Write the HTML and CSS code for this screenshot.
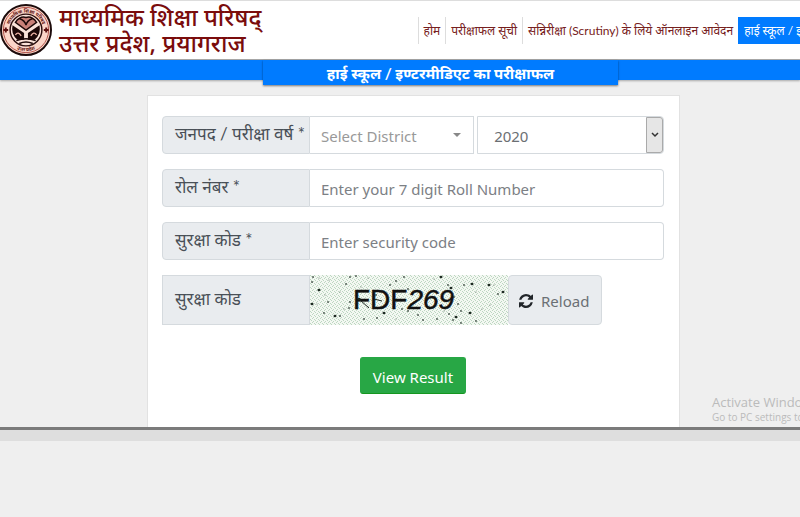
FILE: index.html
```html
<!DOCTYPE html>
<html lang="hi">
<head>
  <meta charset="UTF-8">
  <meta name="viewport" content="width=device-width, initial-scale=1.0">
  <title>हाई स्कूल / इण्टरमीडिएट का परीक्षाफल</title>
  <link rel="stylesheet" href="styles.css">
</head>
<body>

  <header class="site-header">
    <a class="brand" href="#">
      <svg class="logo" viewBox="0 0 54 54" aria-hidden="true">
        <circle cx="27" cy="27" r="26" fill="#fbd5c8" stroke="#1c0b0b" stroke-width="2"/>
        <circle cx="27" cy="27" r="23.5" fill="none" stroke="#b0524a" stroke-width="1"/>
        <path id="ringTop" d="M9 27a18 18 0 0 1 36 0" fill="none"/>
        <path id="ringBottom" d="M5 27a22 22 0 0 0 44 0" fill="none"/>
        <text class="logo-text"><textPath href="#ringTop" startOffset="50%">माध्यमिक शिक्षा परिषद</textPath></text>
        <text class="logo-text"><textPath href="#ringBottom" startOffset="50%">उत्तर प्रदेश</textPath></text>
        <path d="M3.500 27h5M6 24.500v5M45.500 27h5M48 24.500v5" stroke="#5c1010" stroke-width="2"/>
        <circle cx="27" cy="27" r="16.500" fill="#fbe3da" stroke="#2a0d0d" stroke-width="1.500"/>
        <path d="M16 19Q21 12 27 14Q33 12 38 19L27 27Z" fill="#c98078" stroke="#1d0808" stroke-width="1.500"/>
        <path d="M20 15Q26 17 27 22Q28 17 34 15" fill="none" stroke="#1d0808" stroke-width="1.500"/>
        <path d="M13 22L25 30V37H18Q11 31 13 22ZM41 22L29 30V37H36Q43 31 41 22Z" fill="#1d0808"/>
        <path d="M16 32Q19 28 22 33M38 32Q35 28 32 33" fill="none" stroke="#f0b6a8" stroke-width="1.500"/>
        <path d="M17 38Q27 34 37 38M20 41Q27 38 34 41" fill="none" stroke="#1d0808" stroke-width="1.500"/>
      </svg>
      <span class="brand-name">माध्यमिक शिक्षा परिषद्<br>उत्तर प्रदेश, प्रयागराज</span>
    </a>
    <nav class="main-nav">
      <a href="#">होम</a>
      <a href="#">परीक्षाफल सूची</a>
      <a href="#">सन्निरीक्षा (Scrutiny) के लिये ऑनलाइन आवेदन</a>
      <a class="active" href="#">हाई स्कूल / इण्टरमीडिएट का परीक्षाफल</a>
    </nav>
  </header>

  <div class="title-bar">
    <h1 class="page-title">हाई स्कूल / इण्टरमीडिएट का परीक्षाफल</h1>
  </div>

  <main class="content">
    <form class="result-form">
      <div class="form-row">
        <label class="row-label" for="district">जनपद / परीक्षा वर्ष *</label>
        <div class="select-box district">
          <select id="district">
            <option>Select District</option>
          </select>
          <span class="caret"></span>
        </div>
        <div class="select-box year">
          <select id="year" aria-label="परीक्षा वर्ष">
            <option>2020</option>
          </select>
          <span class="arrow-button">
            <svg viewBox="0 0 8 6" width="8" height="6"><path d="M1 1l3 3 3-3" fill="none" stroke="#333" stroke-width="1.500"/></svg>
          </span>
        </div>
      </div>

      <div class="form-row">
        <label class="row-label" for="roll">रोल नंबर *</label>
        <input class="row-input" type="text" id="roll" placeholder="Enter your 7 digit Roll Number">
      </div>

      <div class="form-row">
        <label class="row-label" for="code">सुरक्षा कोड *</label>
        <input class="row-input" type="text" id="code" placeholder="Enter security code">
      </div>

      <div class="form-row captcha-row">
        <span class="row-label">सुरक्षा कोड</span>
        <svg class="captcha" viewBox="0 0 198 50" role="img" aria-label="FDF269">
          <defs>
            <pattern id="hatch" width="4" height="4" patternUnits="userSpaceOnUse">
              <rect width="4" height="4" fill="#f3f8f2"/>
              <path d="M0 0h1v1h-1zM1 1h1v1h-1zM3 2h1v1h-1zM2 3h1v1h-1z" fill="#bdd6c1"/>
            </pattern>
          </defs>
          <rect width="198" height="50" fill="url(#hatch)"/>
          <text class="captcha-text" x="43" y="34">FDF<tspan font-style="italic">269</tspan></text>
          <path d="M50 25l9 8M64 24l8 2" stroke="#1b241e" stroke-width="1" fill="none"/>
          <g id="specks" fill="#1d2a22"></g>
        </svg>
        <button class="reload" type="button">
          <svg viewBox="0 0 1536 1536" width="14" height="14" aria-hidden="true">
            <path fill="#212529" d="M1511 928q0 5-1 7-64 268-268 434.500T764 1536q-146 0-282.500-55T238 1324l-129 129q-19 19-45 19t-45-19-19-45V960q0-26 19-45t45-19h448q26 0 45 19t19 45-19 45l-137 137q71 66 161 102t187 36q134 0 250-65t186-179q11-17 53-117 8-23 30-23h192q13 0 22.500 9.500t9.500 22.500zm25-800v448q0 26-19 45t-45 19h-448q-26 0-45-19t-19-45 19-45l138-138Q969 256 768 256q-134 0-250 65T332 500q-11 17-53 117-8 23-30 23H50q-13 0-22.500-9.500T18 608v-7q65-268 270-434.500T768 0q146 0 284 55.500T1297 212l130-129q19-19 45-19t45 19 19 45z"/>
          </svg>
          Reload
        </button>
      </div>

      <button class="submit" type="button">View Result</button>
    </form>

    <aside class="watermark">
      <p class="watermark-title">Activate Windows</p>
      <p>Go to PC settings to activate Windows.</p>
    </aside>
  </main>

  <footer class="site-footer"></footer>

  <script>
    // noise on the captcha: x, y, size
    const specks = [
      [3,2,2],[9,3,1],[2,7,2],[9,15,3],[2,29,3],[7,29,1],[14,38,2],[25,41,3],[30,41,2],[18,27,2],
      [36,9,2],[30,17,1],[40,2,2],[46,1,2],[34,34,1],[40,27,2],[39,33,2],[58,3,1],[54,44,2],[67,43,2],
      [74,38,3],[80,10,2],[66,20,2],[86,6,2],[94,2,2],[98,14,2],[92,34,2],[98,36,2],[108,40,2],[113,45,2],
      [118,33,2],[124,4,1],[131,2,3],[138,10,2],[141,13,3],[144,22,2],[148,29,2],[139,39,2],[146,42,3],[143,45,2],
      [151,48,2],[154,10,2],[162,9,3],[166,17,1],[160,38,3],[166,46,2],[151,36,2],[179,10,3],[184,10,1],[180,30,1],
      [188,19,2],[193,17,3],[134,36,1],[127,44,2],[86,44,1],[19,5,1],[51,12,1],[15,20,1],[172,34,1],[49,24,3]
    ];
    document.getElementById("specks").innerHTML = specks.map(([x, y, s]) =>
      `<ellipse cx="${x}" cy="${y}" rx="${s / 2}" ry="${s / 2.5}"/>`).join("");
  </script>
</body>
</html>
```

FILE: styles.css
```css
* { box-sizing: border-box; }
body {
  margin: 0; min-height: 100vh; background-color: #efefef; overflow-x: hidden;
  font-family: "Noto Sans", "Noto Sans Devanagari", sans-serif; font-size: 15px;
}
.site-header {
  display: flex; align-items: center; gap: 156px; height: 60px;
  background-color: white; border-top: 1px solid #ddd; border-bottom: 1px solid #aaa;
  overflow: hidden; white-space: nowrap;
}
.brand {
  display: flex; align-items: center; gap: 7px; flex-shrink: 0;
  color: #7a0c0c; text-decoration: none;
}
.logo { width: 52px; height: 54px; }
.logo-text { font-size: 5px; font-weight: bold; fill: #5c1010; text-anchor: middle; }
.brand-name { font-size: 24px; line-height: 26px; font-weight: 500; }
.main-nav { display: flex; }
.main-nav a {
  flex-shrink: 0; height: 27px; padding: 0 5px; line-height: 28px;
  font-family: Lato, "Noto Sans Devanagari", sans-serif;
  font-size: 12px; color: #762020; text-decoration: none; border-left: 1px solid #ddd;
}
.main-nav a.active { background-color: #007bff; border-color: #007bff; color: white; }

.title-bar {
  display: flex; justify-content: center; align-items: flex-start;
  height: 20px; padding-right: 120px; padding-left: 201px;
  background-color: #007bff; box-shadow: 0 1px 2px rgba(0,0,0,0.3);
}
.page-title {
  flex: 0 0 355px; height: 25px; margin: 0; line-height: 26px; text-align: center;
  font-family: Lato, "Noto Sans Devanagari", sans-serif;
  font-size: 15px; font-weight: bold; color: white;
  background-color: #007bff; box-shadow: 0 1px 2px rgba(0,0,0,0.5);
}

.content {
  position: relative; padding: 15px 120px 0 147px;
  border-bottom: 3px solid #7b7b7b; overflow: hidden;
}
.result-form {
  display: flex; flex-direction: column; gap: 15px; padding: 20px 15px 33px 14px;
  background-color: white; border: 1px solid #e2e2e2; border-bottom: none;
}
.form-row { display: flex; height: 38px; }
.row-label {
  display: flex; align-items: center; flex: 0 0 148px; padding-left: 12px;
  background-color: #e9ecef; border: 1px solid #d5dade; border-radius: 4px 0 0 4px;
  font-family: Lato, "Noto Sans Devanagari", sans-serif;
  font-size: 17px; color: #495057; white-space: nowrap;
}
.row-input {
  flex: 1; min-width: 0; padding: 2px 11px 0; border: 1px solid #d5dade; border-left: none;
  border-radius: 0 4px 4px 0; background-color: white; font: inherit;
}
.row-input::placeholder { color: #7c8085; opacity: 1; }
.select-box { display: flex; position: relative; border: 1px solid #d5dade; }
.select-box select {
  width: 100%; padding: 2px 11px 0; border: none; background: none;
  appearance: none; font: inherit; color: #999;
}
.district { flex: 165; margin-right: 3px; border-left: none; }
.year { flex: 187; border-radius: 0 4px 4px 0; }
.year select { padding-left: 16px; color: #6b6f73; }
.caret {
  position: absolute; right: 12px; top: 16px; pointer-events: none;
  border: 4px solid transparent; border-top-color: #888; border-bottom: none;
}
.arrow-button {
  display: flex; align-items: center; justify-content: center;
  position: absolute; top: 0; right: 0; bottom: 0; width: 17px; pointer-events: none;
  background-color: #e6e6e6; border: 1px solid #aaa; border-radius: 0 3px 3px 0;
}
.captcha-row { height: 50px; }
.captcha-row .row-label { border-radius: 0; }
.captcha { flex: 0 0 198px; height: 50px; }
.captcha-text {
  font-family: "Liberation Sans", sans-serif; font-size: 28px;
  fill: #111; stroke: #111; stroke-width: 0.5px;
}
.reload {
  display: flex; align-items: center; gap: 8px; padding: 2px 12px 0 10px;
  background-color: #e9ecef; border: 1px solid #d5dade; border-radius: 4px;
  font: inherit; color: #6b7075;
}
.submit {
  align-self: center; height: 37px; margin: 17px 0 0; padding: 3px 12px 0;
  background-color: #28a745; border: 1px solid #28a745; border-bottom-color: #15961f;
  border-radius: 3px; font: inherit; color: white;
}
.watermark {
  position: absolute; left: 712px; bottom: 3px; white-space: nowrap;
  font-family: "Open Sans", sans-serif; font-size: 10px; line-height: 14px; color: #bbb;
}
.watermark p { margin: 0; }
.watermark .watermark-title { font-size: 13px; line-height: 16px; }
.site-footer { height: 11px; background-color: #dedede; }
```
